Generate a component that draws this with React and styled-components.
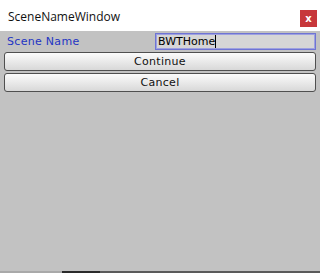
import React, { useState } from 'react';
import styled, { createGlobalStyle } from 'styled-components';

const GlobalStyle = createGlobalStyle`
  html, body {
    margin: 0;
    padding: 0;
    background: #c2c2c2;
  }
  #root {
    width: 320px;
    height: 273px;
  }
`;

const Window = styled.div`
  width: 320px;
  height: 273px;
  display: flex;
  flex-direction: column;
  background: #c2c2c2;
  overflow: hidden;
`;

const TitleBar = styled.div`
  height: 31px;
  flex: none;
  background: #ffffff;
  display: flex;
  align-items: center;
  justify-content: space-between;
  padding: 0 3px 0 8px;
  box-sizing: border-box;
`;

const Title = styled.span`
  font-family: "Open Sans", "Noto Sans", sans-serif;
  font-size: 12px;
  color: #111;
  margin-top: 2px;
`;

const CloseButton = styled.button`
  width: 17px;
  height: 17px;
  margin-top: 5px;
  padding: 0;
  border: none;
  background: #c7373b;
  color: #fff;
  font-family: "DejaVu Sans", sans-serif;
  font-size: 10px;
  font-weight: bold;
  line-height: 17px;
  text-align: center;
`;

const Content = styled.div`
  flex: 1;
  display: flex;
  flex-direction: column;
  gap: 2px;
  padding: 2px 4px 0 4px;
`;

const FieldRow = styled.div`
  display: flex;
  align-items: center;
  height: 17px;
`;

const Label = styled.label`
  width: 151px;
  box-sizing: border-box;
  padding-left: 3px;
  font-family: "DejaVu Sans", sans-serif;
  font-size: 11px;
  letter-spacing: 0.3px;
  color: #1f35c4;
`;

const Caret = styled.span`
  display: inline-block;
  width: 1px;
  height: 13px;
  background: #000;
  vertical-align: middle;
`;

const FakeInput = styled.div`
  flex: 1;
  height: 17px;
  box-sizing: border-box;
  border: 1px solid #6f74d4;
  box-shadow: inset 0 0 0 1px #9ea1df;
  background: #d6d6d6;
  padding: 0 2px;
  display: flex;
  align-items: center;
  font-family: "DejaVu Sans", sans-serif;
  font-size: 11px;
  color: #000;
`;

const Button = styled.button`
  height: 19px;
  width: 100%;
  box-sizing: border-box;
  border: 1px solid #4f4f4f;
  border-radius: 3px;
  background: linear-gradient(#fbfbfb, #d8d8d8);
  font-family: "DejaVu Sans", sans-serif;
  font-size: 11px;
  letter-spacing: 0.3px;
  color: #111;
  padding: 0;
  line-height: 17px;
`;

const BottomStrip = styled.div`
  height: 2px;
  flex: none;
  display: flex;
`;

const StripPart = styled.div`
  width: ${p => p.$w}px;
  flex: ${p => (p.$w ? 'none' : 1)};
  background: ${p => p.$c};
`;

export default function App() {
  const [name] = useState('BWTHome');
  return (
    <>
      <GlobalStyle />
      <Window>
        <TitleBar>
          <Title>SceneNameWindow</Title>
          <CloseButton>x</CloseButton>
        </TitleBar>
        <Content>
          <FieldRow>
            <Label>Scene Name</Label>
            <FakeInput>
              {name}
              <Caret />
            </FakeInput>
          </FieldRow>
          <Button>Continue</Button>
          <Button>Cancel</Button>
        </Content>
        <BottomStrip>
          <StripPart $w={62} $c="#a9a9a9" />
          <StripPart $w={38} $c="#2a2a2a" />
          <StripPart $c="#5a5a5a" />
        </BottomStrip>
      </Window>
    </>
  );
}
